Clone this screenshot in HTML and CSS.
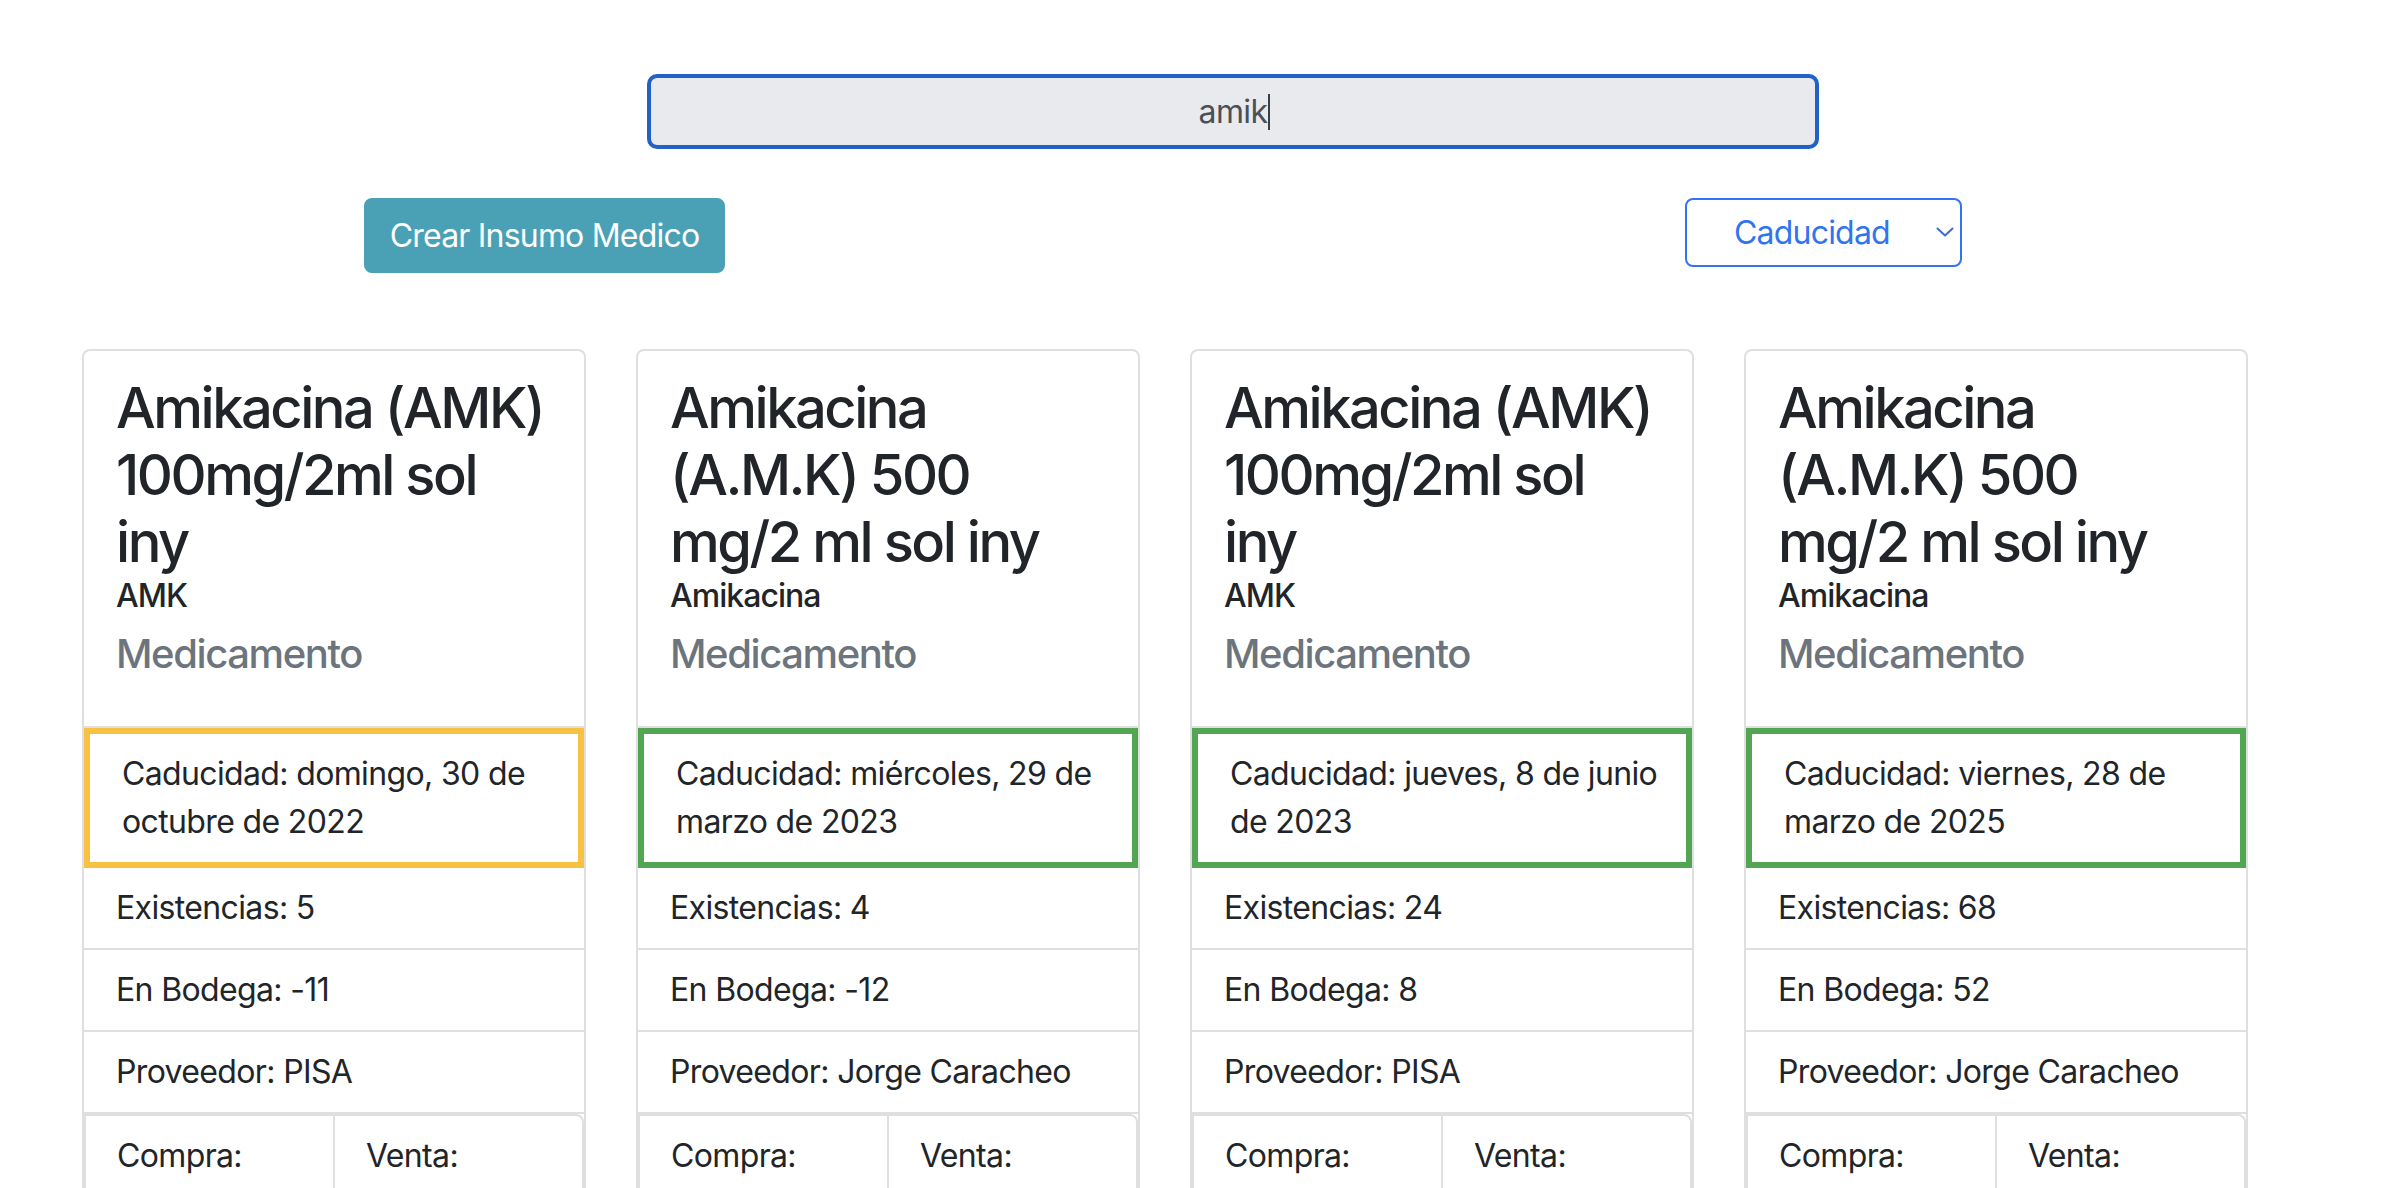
FILE: index.html
```html
<!DOCTYPE html>
<html lang="es">
<head>
<meta charset="utf-8">
<title>Insumos</title>
<link rel="stylesheet" href="styles.css">
</head>
<body>
<div class="page">
  <div class="search">
    <input class="search-input" type="text" value="amik">
    <span class="caret"></span>
  </div>
  <div class="toolbar">
    <button class="btn-create" type="button">Crear Insumo Medico</button>
    <div class="select-wrap">
      <select class="sort-select"><option>Caducidad</option><option>Nombre</option></select>
      <svg class="chev" width="18" height="12" viewBox="0 0 18 12"><path d="M1.5 2.5 L9 9.5 L16.5 2.5" fill="none" stroke="#3a6ecf" stroke-width="2" stroke-linecap="round" stroke-linejoin="round"/></svg>
    </div>
  </div>
  <div class="cards">
    <div class="card">
      <div class="card-body">
        <h3 class="card-title">Amikacina (AMK)<br>100mg/2ml sol<br>iny</h3>
        <h6 class="card-subtitle">AMK</h6>
        <h5 class="card-type">Medicamento</h5>
      </div>
      <ul class="list">
        <li class="item expiry warn">Caducidad: domingo, 30 de<br>octubre de 2022</li>
        <li class="item">Existencias: 5</li>
        <li class="item">En Bodega: -11</li>
        <li class="item">Proveedor: PISA</li>
        <li class="prices"><div class="price-cell">Compra:</div><div class="price-cell last">Venta:</div></li>
      </ul>
    </div>
    <div class="card">
      <div class="card-body">
        <h3 class="card-title">Amikacina<br>(A.M.K) 500<br>mg/2 ml sol iny</h3>
        <h6 class="card-subtitle">Amikacina</h6>
        <h5 class="card-type">Medicamento</h5>
      </div>
      <ul class="list">
        <li class="item expiry ok">Caducidad: miércoles, 29 de<br>marzo de 2023</li>
        <li class="item">Existencias: 4</li>
        <li class="item">En Bodega: -12</li>
        <li class="item">Proveedor: Jorge Caracheo</li>
        <li class="prices"><div class="price-cell">Compra:</div><div class="price-cell last">Venta:</div></li>
      </ul>
    </div>
    <div class="card">
      <div class="card-body">
        <h3 class="card-title">Amikacina (AMK)<br>100mg/2ml sol<br>iny</h3>
        <h6 class="card-subtitle">AMK</h6>
        <h5 class="card-type">Medicamento</h5>
      </div>
      <ul class="list">
        <li class="item expiry ok">Caducidad: jueves, 8 de junio<br>de 2023</li>
        <li class="item">Existencias: 24</li>
        <li class="item">En Bodega: 8</li>
        <li class="item">Proveedor: PISA</li>
        <li class="prices"><div class="price-cell">Compra:</div><div class="price-cell last">Venta:</div></li>
      </ul>
    </div>
    <div class="card">
      <div class="card-body">
        <h3 class="card-title">Amikacina<br>(A.M.K) 500<br>mg/2 ml sol iny</h3>
        <h6 class="card-subtitle">Amikacina</h6>
        <h5 class="card-type">Medicamento</h5>
      </div>
      <ul class="list">
        <li class="item expiry ok">Caducidad: viernes, 28 de<br>marzo de 2025</li>
        <li class="item">Existencias: 68</li>
        <li class="item">En Bodega: 52</li>
        <li class="item">Proveedor: Jorge Caracheo</li>
        <li class="prices"><div class="price-cell">Compra:</div><div class="price-cell last">Venta:</div></li>
      </ul>
    </div>
  </div>
</div>
</body>
</html>
```

FILE: styles.css
```css
html, body {
  margin: 0;
  padding: 0;
  background: #ffffff;
}
body {
  font-family: Inter, "Liberation Sans", sans-serif;
  letter-spacing: -0.02em;
  color: #212529;
  font-size: 32px;
  line-height: 48px;
  overflow: hidden;
}
.page {
  padding-top: 74px;
}
.search {
  position: relative;
  margin-left: 647px;
  width: 1172px;
  height: 75px;
}
.search-input {
  box-sizing: border-box;
  width: 100%;
  height: 75px;
  border: 4px solid #2262c8;
  border-radius: 10px;
  background: #e9eaee;
  color: #495057;
  font-family: inherit;
  letter-spacing: inherit;
  font-size: 32px;
  text-align: center;
  outline: none;
  padding: 0 20px;
}
.caret {
  position: absolute;
  left: calc(50% + 35px);
  top: 20px;
  width: 2px;
  height: 36px;
  background: #3a3f44;
}
.toolbar {
  display: flex;
  align-items: flex-start;
  margin-top: 49px;
}
.btn-create {
  box-sizing: border-box;
  margin-left: 364px;
  width: 361px;
  height: 75px;
  border: 2px solid #4aa1b5;
  border-radius: 8px;
  background: #4aa1b5;
  color: #ffffff;
  font-family: inherit;
  letter-spacing: -0.025em;
  font-size: 32px;
  padding: 0;
}
.select-wrap {
  position: relative;
  margin-left: 960px;
  width: 277px;
  height: 69px;
}
.sort-select {
  appearance: none;
  -webkit-appearance: none;
  box-sizing: border-box;
  width: 100%;
  height: 69px;
  border: 2px solid #3174f0;
  border-radius: 8px;
  background: #ffffff;
  color: #3174f0;
  font-family: inherit;
  letter-spacing: -0.025em;
  font-size: 32px;
  padding: 0 0 0 47px;
  outline: none;
}
.chev {
  position: absolute;
  right: 8px;
  top: 28px;
}
.cards {
  display: grid;
  grid-template-columns: repeat(4, 504px);
  column-gap: 50px;
  padding-left: 82px;
  margin-top: 76px;
  align-items: start;
}
.card {
  box-sizing: border-box;
  border: 2px solid #dfdfdf;
  border-radius: 8px;
  background: #ffffff;
  overflow: hidden;
}
.card-body {
  padding: 24px 32px 48px;
}
.card-title {
  margin: 0;
  font-size: 56px;
  line-height: 67.2px;
  font-weight: 500;
  letter-spacing: -0.044em;
  white-space: nowrap;
}
.card-subtitle {
  margin: 0 0 15px;
  font-size: 32px;
  line-height: 38.4px;
  font-weight: 500;
  letter-spacing: -0.03em;
}
.card-type {
  margin: 0;
  font-size: 40px;
  line-height: 48px;
  font-weight: 500;
  letter-spacing: -0.035em;
  color: #6c757d;
}
.list {
  list-style: none;
  margin: 0;
  padding: 0;
  border-top: 2px solid #dfdfdf;
}
.item {
  padding: 16px 32px;
  border-bottom: 2px solid #dfdfdf;
  white-space: nowrap;
}
.expiry {
  border: 6px solid #52a553;
  padding: 16px 32px;
}
.expiry.warn {
  border-color: #f7c142;
}
.prices {
  display: flex;
}
.price-cell {
  flex: 1 1 0;
  box-sizing: border-box;
  border: 2px solid #dfdfdf;
  padding: 16px 31px 60px;
}
.price-cell.last {
  border-left: 0;
  border-top-right-radius: 8px;
}
```
